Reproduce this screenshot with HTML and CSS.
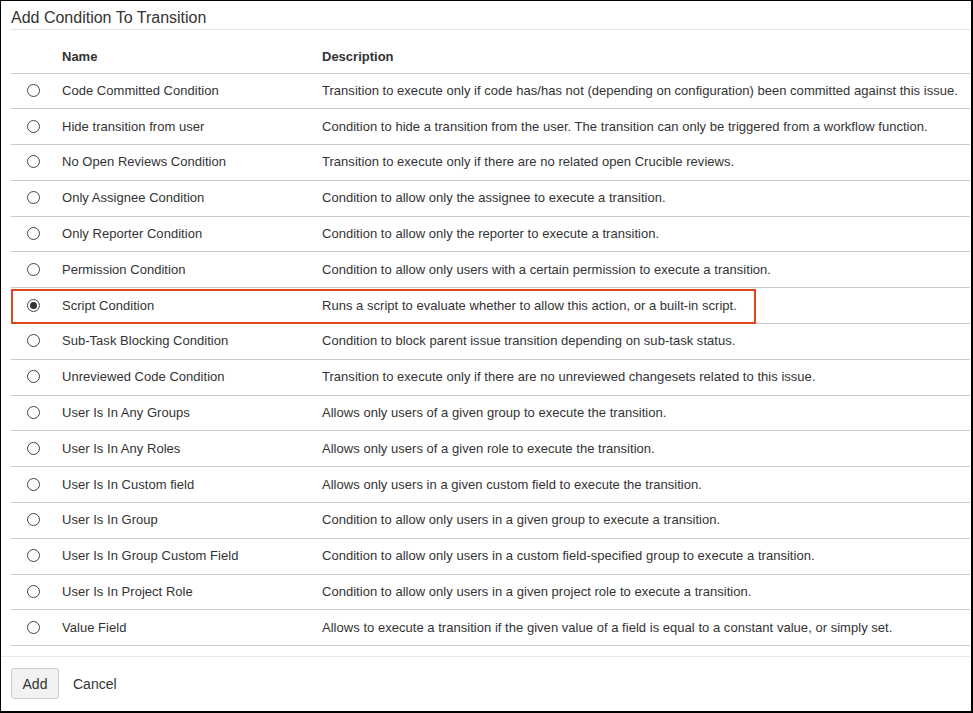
FILE: index.html
```html
<!DOCTYPE html>
<html>
<head>
<meta charset="utf-8">
<link rel="stylesheet" href="styles.css">
</head>
<body>
<div class="frame">
  <h2 class="title">Add Condition To Transition</h2>
  <table class="conds">
    <thead>
      <tr><th class="c-radio"></th><th class="c-name">Name</th><th class="c-desc">Description</th></tr>
    </thead>
    <tbody>
      <tr><td class="c-radio"><span class="radio"></span></td><td>Code Committed Condition</td><td>Transition to execute only if code has/has not (depending on configuration) been committed against this issue.</td></tr>
      <tr><td class="c-radio"><span class="radio"></span></td><td>Hide transition from user</td><td>Condition to hide a transition from the user. The transition can only be triggered from a workflow function.</td></tr>
      <tr><td class="c-radio"><span class="radio"></span></td><td>No Open Reviews Condition</td><td>Transition to execute only if there are no related open Crucible reviews.</td></tr>
      <tr><td class="c-radio"><span class="radio"></span></td><td>Only Assignee Condition</td><td>Condition to allow only the assignee to execute a transition.</td></tr>
      <tr><td class="c-radio"><span class="radio"></span></td><td>Only Reporter Condition</td><td>Condition to allow only the reporter to execute a transition.</td></tr>
      <tr><td class="c-radio"><span class="radio"></span></td><td>Permission Condition</td><td>Condition to allow only users with a certain permission to execute a transition.</td></tr>
      <tr class="selected"><td class="c-radio"><span class="radio checked"></span></td><td>Script Condition</td><td><span class="desc-wrap">Runs a script to evaluate whether to allow this action, or a built-in script.<span class="highlight"></span></span></td></tr>
      <tr><td class="c-radio"><span class="radio"></span></td><td>Sub-Task Blocking Condition</td><td>Condition to block parent issue transition depending on sub-task status.</td></tr>
      <tr><td class="c-radio"><span class="radio"></span></td><td>Unreviewed Code Condition</td><td>Transition to execute only if there are no unreviewed changesets related to this issue.</td></tr>
      <tr><td class="c-radio"><span class="radio"></span></td><td>User Is In Any Groups</td><td>Allows only users of a given group to execute the transition.</td></tr>
      <tr><td class="c-radio"><span class="radio"></span></td><td>User Is In Any Roles</td><td>Allows only users of a given role to execute the transition.</td></tr>
      <tr><td class="c-radio"><span class="radio"></span></td><td>User Is In Custom field</td><td>Allows only users in a given custom field to execute the transition.</td></tr>
      <tr><td class="c-radio"><span class="radio"></span></td><td>User Is In Group</td><td>Condition to allow only users in a given group to execute a transition.</td></tr>
      <tr><td class="c-radio"><span class="radio"></span></td><td>User Is In Group Custom Field</td><td>Condition to allow only users in a custom field-specified group to execute a transition.</td></tr>
      <tr><td class="c-radio"><span class="radio"></span></td><td>User Is In Project Role</td><td>Condition to allow only users in a given project role to execute a transition.</td></tr>
      <tr><td class="c-radio"><span class="radio"></span></td><td>Value Field</td><td>Allows to execute a transition if the given value of a field is equal to a constant value, or simply set.</td></tr>
    </tbody>
  </table>
  <div class="footer">
    <button class="btn">Add</button>
    <a class="cancel">Cancel</a>
  </div>
</div>
</body>
</html>
```
FILE: styles.css
```css
* { box-sizing: border-box; }
html, body { margin: 0; padding: 0; background: #fff; }
body {
  font-family: Arial, "Liberation Sans", sans-serif;
  color: #333;
  font-size: 13px;
}
.frame {
  width: 973px;
  height: 713px;
  border-style: solid;
  border-color: #000;
  border-width: 1px 2px 2px 1px;
  padding: 0 0 0 10px;
  overflow: hidden;
}
.title {
  margin: 0;
  padding: 8px 0 3px 0;
  font-size: 16px;
  font-weight: normal;
  line-height: 17px;
  color: #333;
  border-bottom: 1px solid #e6e6dc;
}
.conds {
  width: 959px;
  border-collapse: collapse;
  margin-top: 8px;
  table-layout: fixed;
}
.conds th {
  font-weight: bold;
  text-align: left;
  height: 35px;
  padding: 2px 0 0 0;
  vertical-align: middle;
  border-bottom: 1px solid #ccc;
}
.conds td {
  height: 35.8px;
  padding: 0 0 1px 0;
  vertical-align: middle;
  border-bottom: 1px solid #ccc;
  white-space: nowrap;
  letter-spacing: 0.03px;
}
.c-radio { width: 51px; }
.conds th.c-name { width: 260px; }
.conds td.c-radio { text-align: left; padding-left: 16px; }
.radio {
  display: block;
  width: 13px;
  height: 13px;
  border: 1px solid #444;
  border-radius: 50%;
  background: #fff;
  position: relative;
}
.radio.checked::after {
  content: "";
  position: absolute;
  left: 2px;
  top: 2px;
  width: 7px;
  height: 7px;
  border-radius: 50%;
  background: #333;
}
.desc-wrap { position: relative; display: inline-block; }
.highlight {
  position: absolute;
  left: -311px;
  right: -19px;
  top: -9px;
  bottom: -11px;
  border: 2px solid #e0461e;
  pointer-events: none;
}
.footer {
  margin-top: 10px;
  border-top: 1px solid #e8e8e8;
  padding-top: 11px;
  display: flex;
  align-items: center;
  gap: 14px;
  margin-left: -10px;
  padding-left: 10px;
}
.btn {
  font-family: Arial, "Liberation Sans", sans-serif;
  font-size: 14px;
  color: #333;
  background: #f2f2f2;
  border: 1px solid #ccc;
  border-radius: 3px;
  height: 31px;
  width: 48px;
  padding: 0;
}
.cancel {
  font-size: 14px;
  color: #333;
}
```
